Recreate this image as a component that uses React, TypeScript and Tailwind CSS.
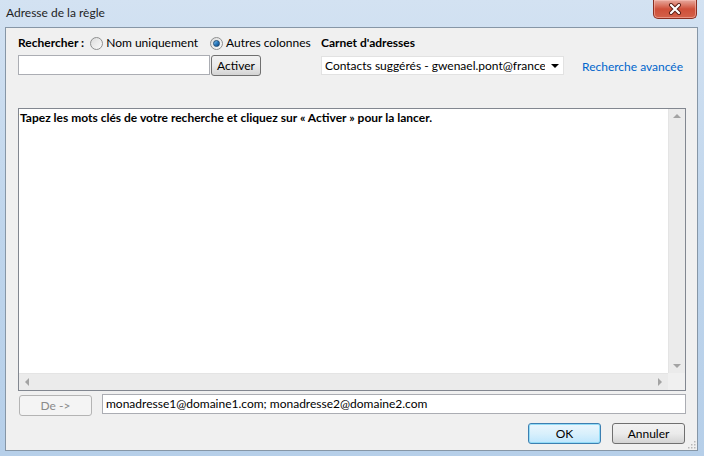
import React from 'react'

function Radio({ checked }: { checked?: boolean }) {
  return (
    <span className="relative inline-flex h-[13px] w-[13px] shrink-0 items-center justify-center rounded-full border border-[#8e8f8f] bg-gradient-to-br from-[#dcdcdc] to-[#fbfbfb]">
      {checked && (
        <span className="h-[7px] w-[7px] rounded-full border border-[#1c4a74] bg-gradient-to-br from-[#7fc4f0] via-[#2c7cc0] to-[#0d4b88]" />
      )}
    </span>
  )
}

function Tri({ dir }: { dir: 'up' | 'down' | 'left' | 'right' }) {
  const pts = {
    up: '0,4 4,0 8,4',
    down: '0,0 8,0 4,4',
    left: '4,0 4,8 0,4',
    right: '0,0 0,8 4,4',
  }[dir]
  const w = dir === 'up' || dir === 'down' ? 8 : 4
  const h = dir === 'up' || dir === 'down' ? 4 : 8
  return (
    <svg width={w} height={h} viewBox={`0 0 ${w} ${h}`}>
      <polygon points={pts} fill="#a3a3a3" />
    </svg>
  )
}

export default function App() {
  const btn =
    'flex items-center justify-center rounded-[3px] border border-[#707070] bg-gradient-to-b from-[#f2f2f2] via-[#ebebeb] to-[#d3d3d3] text-[#000]'

  return (
    <div
      className="flex h-[456px] w-[704px] flex-col overflow-hidden whitespace-nowrap bg-gradient-to-b from-[#d3e2f2] via-[#bfd5ec] to-[#b6cfe9] text-[12px] text-black"
      style={{ fontFamily: 'Lato, "Liberation Sans", Arial, sans-serif' }}
    >
      {/* Title bar */}
      <div className="flex h-[27px] items-start justify-between">
        <div className="pl-[6px] pt-[5px] text-[12px] leading-[16px] text-[#1e1e1e]">Adresse de la règle</div>
        <div className="mr-[7px] flex h-[19px] w-[44px] items-center justify-center rounded-b-[5px] border border-t-0 border-[#8a2f22] bg-gradient-to-b from-[#e6a89d] via-[#cf4f39] to-[#d3614a] shadow-[inset_0_0_0_1px_rgba(255,200,190,0.5)]">
          <svg width="14" height="12" viewBox="0 0 14 12">
            <path d="M3 2 L11 10 M11 2 L3 10" stroke="#5a1d14" strokeWidth="4" strokeLinecap="round" />
            <path d="M3 2 L11 10 M11 2 L3 10" stroke="#fff" strokeWidth="2.2" strokeLinecap="round" />
          </svg>
        </div>
      </div>

      {/* Body */}
      <div className="relative ml-[5px] mr-[6px] mb-[5px] flex flex-1 flex-col border border-[#8696a6] bg-[#f0f0f0] pl-[12px] pr-[11px]">
        <div className="flex h-[80px] pt-[7px]">
          <div className="w-[303px] shrink-0">
            <div className="flex h-[16px] items-center">
              <span className="font-bold">Rechercher :</span>
              <span className="ml-[6px] flex items-center gap-[3px]">
                <Radio />
                <span>Nom uniquement</span>
              </span>
              <span className="ml-[12px] flex items-center gap-[3px]">
                <Radio checked />
                <span>Autres colonnes</span>
              </span>
            </div>
            <div className="mt-[4px] flex items-start">
              <div className="h-[20px] w-[192px] border border-[#abadb3] bg-white" />
              <div className={`${btn} ml-[1px] h-[21px] w-[50px]`}>Activer</div>
            </div>
          </div>
          <div className="w-[261px] shrink-0">
            <div className="flex h-[16px] items-center font-bold">Carnet d'adresses</div>
            <div className="mt-[5px] flex h-[19px] w-[243px] items-center border border-[#e2e2e2] bg-white pl-[3px] pr-[4px]">
              <span className="min-w-0 flex-1 overflow-hidden">Contacts suggérés - gwenael.pont@france</span>
              <svg width="8" height="4" viewBox="0 0 8 4" className="ml-[6px] shrink-0">
                <polygon points="0,0 8,0 4,4" fill="#000" />
              </svg>
            </div>
          </div>
          <div className="shrink-0">
            <div className="h-[16px]" />
            <div className="mt-[7px] text-[#0066cc]">Recherche avancée</div>
          </div>
        </div>

        {/* Results box */}
        <div className="flex h-[283px] flex-col border border-[#828790] bg-white">
          <div className="flex flex-1">
            <div className="flex-1 pl-[1px] pt-[1px] font-bold leading-[15px]">
              Tapez les mots clés de votre recherche et cliquez sur « Activer » pour la lancer.
            </div>
            <div className="flex w-[17px] flex-col items-center justify-between border-l border-[#e4e4e4] bg-[#ebebeb] py-[5px]">
              <Tri dir="up" />
              <Tri dir="down" />
            </div>
          </div>
          <div className="flex h-[17px]">
            <div className="flex flex-1 items-center justify-between border-t border-[#e4e4e4] bg-[#ebebeb] px-[6px]">
              <Tri dir="left" />
              <Tri dir="right" />
            </div>
            <div className="w-[17px] bg-[#f0f0f0]" />
          </div>
        </div>

        {/* De -> row */}
        <div className="mt-[3px] flex items-start">
          <div className="ml-[1px] mt-[1px] flex h-[21px] w-[73px] items-center justify-center rounded-[3px] border border-[#b4b4b4] bg-[#f4f4f4] text-[#8a8a8a]">
            De -&gt;
          </div>
          <div className="ml-[10px] flex h-[20px] flex-1 items-center border border-[#abadb3] bg-white pl-[3px]">
            monadresse1@domaine1.com; monadresse2@domaine2.com
          </div>
        </div>

        {/* OK / Annuler */}
        <div className="mt-[7px] flex justify-end gap-[11px] pr-[1px]">
          <div className="flex h-[21px] w-[73px] items-center justify-center rounded-[3px] border border-[#3c7fb1] bg-gradient-to-b from-[#eaf6fd] via-[#d9f0fc] to-[#bee6fd] shadow-[inset_0_0_0_1px_#93dcf7]">
            OK
          </div>
          <div className={`${btn} h-[21px] w-[73px]`}>Annuler</div>
        </div>

        {/* Resize grip */}
        <svg className="absolute bottom-[1px] right-[1px]" width="10" height="10" viewBox="0 0 10 10">
          {[
            [8, 2], [8, 5], [5, 5], [8, 8], [5, 8], [2, 8],
          ].map(([x, y], i) => (
            <rect key={i} x={x} y={y} width="1.5" height="1.5" fill="#b8b8b8" />
          ))}
        </svg>
      </div>
    </div>
  )
}
